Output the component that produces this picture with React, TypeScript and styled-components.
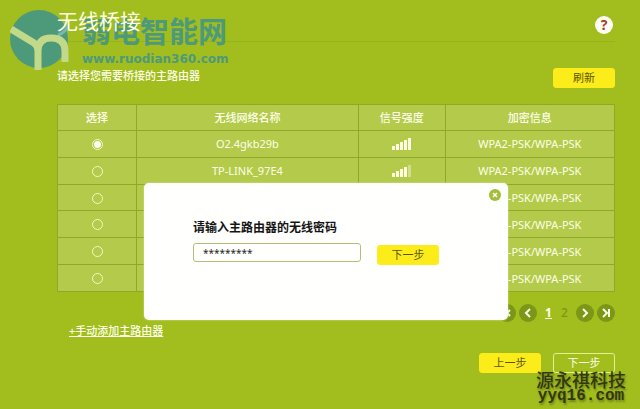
import React, { useState } from "react";
import styled, { createGlobalStyle } from "styled-components";

const Global = createGlobalStyle`
  *, *::before, *::after { box-sizing: border-box; }
  body {
    margin: 0;
    background: #a2bd1e;
    color: #fdffe8;
    font-family: "Noto Sans", "Noto Sans CJK SC", sans-serif;
    font-size: 11px;
  }
  button, input { font: inherit; }
`;

const Page = styled.main`
  position: relative;
  min-height: 100vh;
  padding: 7px 25px 0 57px;
`;

const Header = styled.header`
  display: flex;
  justify-content: space-between;
  align-items: center;
  height: 35px;
  border-bottom: 1px solid #9ab31c;
`;

const Title = styled.h1`
  position: relative;
  z-index: 1;
  margin: 0 0 6px;
  font-size: 21px;
  line-height: 28px;
  font-weight: 400;
`;

const HelpButton = styled.button`
  width: 18px;
  height: 18px;
  margin: 1px 2px 0 0;
  padding: 0;
  border: 0;
  border-radius: 50%;
  background: #fffef4;
  color: #a8402c;
  font-size: 14px;
  line-height: 18px;
  font-weight: 700;
`;

const Intro = styled.div`
  display: flex;
  justify-content: space-between;
  align-items: center;
  margin: 26px 0 16px;
`;

const Hint = styled.p`
  margin: 0 0 4px;
  line-height: 16px;
  font-weight: 500;
`;

const Button = styled.button<{ $outline?: boolean }>`
  width: 62px;
  height: 20px;
  padding: 0;
  border: 1px solid ${(p) => (p.$outline ? "#e6f08c" : "#fbec1a")};
  border-radius: 3px;
  background: ${(p) => (p.$outline ? "transparent" : "#fbec1a")};
  color: ${(p) => (p.$outline ? "#fdffe8" : "#5d5608")};
  line-height: 16px;
`;

const Networks = styled.table`
  width: 100%;
  height: 188px;
  table-layout: fixed;
  border-collapse: collapse;
  background: #b4ca4b;
  line-height: 16px;
  text-align: center;
  th, td {
    height: 26px;
    padding: 1px 0 0;
    border: 1px solid #8fa82a;
  }
  th {
    font-weight: 500;
  }
`;

const Col = styled.col<{ $width: string }>`
  width: ${(p) => p.$width};
`;

const Radio = styled.input`
  appearance: none;
  display: block;
  width: 11px;
  height: 11px;
  margin: 0 auto;
  border: 1px solid #f3f9c0;
  border-radius: 50%;
  &:checked {
    background: radial-gradient(circle, #fffff0 0 3px, transparent 4px);
  }
`;

const Bars = styled.svg`
  display: block;
  margin: 0 auto;
`;

const Pager = styled.nav`
  display: flex;
  justify-content: flex-end;
  align-items: center;
  gap: 7px;
  margin-top: 12px;
`;

const PagerGroup = styled.div`
  display: flex;
  gap: 3px;
`;

const PagerButton = styled.button`
  display: grid;
  place-items: center;
  width: 18px;
  height: 18px;
  padding: 0;
  border: 0;
  border-radius: 50%;
  background: #7c9618;
  color: #fbfde8;
`;

const PageLink = styled.a<{ $current?: boolean }>`
  width: 9px;
  color: ${(p) => (p.$current ? "#fdffe8" : "#7c9618")};
  font-size: 12px;
  font-weight: ${(p) => (p.$current ? 700 : 500)};
  line-height: 16px;
  text-align: center;
  text-decoration: ${(p) => (p.$current ? "underline" : "none")};
`;

const AddLink = styled.a`
  display: block;
  width: max-content;
  margin: 1px 0 0 12px;
  color: #fdffe8;
  line-height: 16px;
  font-weight: 500;
`;

const Actions = styled.div`
  display: flex;
  justify-content: flex-end;
  gap: 12px;
  margin-top: 14px;
`;

const Dialog = styled.form`
  position: absolute;
  top: 183px;
  left: 144px;
  right: 132px;
  height: 137px;
  padding: 36px 48px 0 49px;
  border-radius: 5px;
  background: #fffffd;
  box-shadow: 0 0 2px #dbe6a4;
`;

const DialogLabel = styled.label`
  display: block;
  color: #151515;
  font-size: 12px;
  line-height: 18px;
  font-weight: 700;
`;

const DialogRow = styled.div`
  display: flex;
  gap: 16px;
  margin-top: 6px;
  button { margin-top: 2px; }
`;

const Password = styled.input`
  flex: 0 1 168px;
  min-width: 0;
  height: 19px;
  padding: 0 9px;
  border: 1px solid #b5bf78;
  border-radius: 3px;
  outline: 0;
  background: #fffffd;
  color: #252525;
  font-size: 10px;
  line-height: 16px;
`;

const Close = styled.button`
  position: absolute;
  top: 6px;
  right: 7px;
  display: grid;
  place-items: center;
  width: 12px;
  height: 12px;
  padding: 0;
  border: 0;
  border-radius: 50%;
  background: #a3bd38;
  color: #fffffd;
`;

const SiteMark = styled.div`
  position: absolute;
  top: 9px;
  left: 10px;
  display: flex;
  gap: 12px;
  color: #4d9a7b;
  pointer-events: none;
`;

const SiteName = styled.div`
  margin-top: 7px;
  font-size: 29px;
  line-height: 32px;
  font-weight: 700;
`;

const SiteUrl = styled.div`
  margin-top: 3px;
  font-family: "DejaVu Sans", sans-serif;
  font-size: 12px;
  line-height: 16px;
  font-weight: 700;
`;

const CornerMark = styled.div`
  position: absolute;
  right: 14px;
  bottom: 6px;
  color: #33380f;
  font-size: 18px;
  line-height: 18px;
  font-weight: 500;
  text-align: center;
  text-shadow: 1px 2px 2px #6f8418;
`;

const CornerUrl = styled.div`
  font-family: "Liberation Mono", monospace;
  font-size: 16px;
  line-height: 14px;
  font-weight: 700;
`;

const networks = [
  { name: "O2.4gkb29b", level: 5 },
  { name: "TP-LINK_97E4", level: 4 },
  { name: "", level: 4 },
  { name: "", level: 3 },
  { name: "", level: 3 },
  { name: "", level: 2 },
];

function Signal({ level }: { level: number }) {
  return (
    <Bars width="20" height="12" viewBox="0 0 20 12" fill="#fdffe0" role="img" aria-label={`${level}/5`}>
      {[4, 6, 8, 10, 12].map((h, i) => (
        <rect key={h} x={i * 4} y={12 - h} width="3" height={h} opacity={i < level ? 1 : 0.4} />
      ))}
    </Bars>
  );
}

function Glyph({ d }: { d: string }) {
  return (
    <svg width="10" height="10" viewBox="0 0 10 10" fill="none" stroke="currentColor" strokeWidth="2">
      <path d={d} />
    </svg>
  );
}

export default function App() {
  const [selected, setSelected] = useState(0);
  const [password, setPassword] = useState("*********");
  return (
    <Page>
      <Global />
      <Header>
        <Title>无线桥接</Title>
        <HelpButton>?</HelpButton>
      </Header>
      <Intro>
        <Hint>请选择您需要桥接的主路由器</Hint>
        <Button>刷新</Button>
      </Intro>
      <Networks>
        <colgroup>
          <Col $width="14.2%" />
          <Col $width="39.8%" />
          <Col $width="15.6%" />
          <Col $width="30.4%" />
        </colgroup>
        <thead>
          <tr>
            <th>选择</th>
            <th>无线网络名称</th>
            <th>信号强度</th>
            <th>加密信息</th>
          </tr>
        </thead>
        <tbody>
          {networks.map((n, i) => (
            <tr key={i}>
              <td>
                <Radio
                  type="radio"
                  name="network"
                  aria-label={n.name || `${i + 1}`}
                  checked={selected === i}
                  onChange={() => setSelected(i)}
                />
              </td>
              <td>{n.name}</td>
              <td><Signal level={n.level} /></td>
              <td>WPA2-PSK/WPA-PSK</td>
            </tr>
          ))}
        </tbody>
      </Networks>
      <Pager>
        <PagerGroup>
          <PagerButton aria-label="首页"><Glyph d="M8 2 5 5l3 3M3 1v8" /></PagerButton>
          <PagerButton aria-label="前页"><Glyph d="M7 1 3 5l4 4" /></PagerButton>
        </PagerGroup>
        <PageLink href="#1" $current>1</PageLink>
        <PageLink href="#2">2</PageLink>
        <PagerGroup>
          <PagerButton aria-label="后页"><Glyph d="M3 1l4 4-4 4" /></PagerButton>
          <PagerButton aria-label="末页"><Glyph d="M2 1l4 4-4 4M8 1v8" /></PagerButton>
        </PagerGroup>
      </Pager>
      <AddLink href="#add">+手动添加主路由器</AddLink>
      <Actions>
        <Button>上一步</Button>
        <Button $outline>下一步</Button>
      </Actions>
      <Dialog onSubmit={(e) => e.preventDefault()}>
        <Close type="button" aria-label="关闭">
          <svg width="6" height="6" viewBox="0 0 6 6" stroke="currentColor" strokeWidth="1.5"><path d="M1 1l4 4M5 1 1 5" /></svg>
        </Close>
        <DialogLabel htmlFor="password">请输入主路由器的无线密码</DialogLabel>
        <DialogRow>
          <Password id="password" value={password} onChange={(e) => setPassword(e.target.value)} />
          <Button>下一步</Button>
        </DialogRow>
      </Dialog>
      <SiteMark>
        <svg width="60" height="62" viewBox="0 0 60 62">
          <circle cx="29" cy="30" r="29" fill="#4d9a7b" />
          <path d="M48 26Q55 24 59 15" fill="none" stroke="#78b6b4" strokeWidth="3" />
          <path d="M1 20 24 34Q28 37 28 42M28 61V42Q28 29 41 29Q55 29 55 42V53" fill="none" stroke="#c2d98a" strokeWidth="7" />
        </svg>
        <div>
          <SiteName>弱电智能网</SiteName>
          <SiteUrl>www.ruodian360.com</SiteUrl>
        </div>
      </SiteMark>
      <CornerMark>
        源永祺科技
        <CornerUrl>yyq16.com</CornerUrl>
      </CornerMark>
    </Page>
  );
}
